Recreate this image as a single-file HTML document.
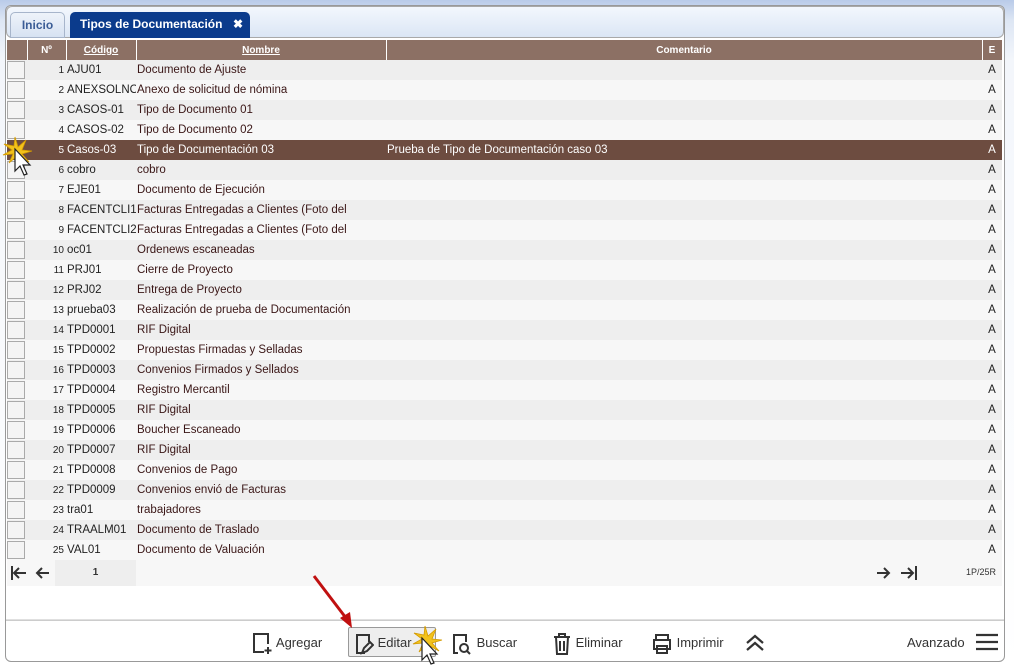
<!DOCTYPE html>
<html><head><meta charset="utf-8">
<style>
*{box-sizing:border-box;margin:0;padding:0}
body{width:1014px;height:668px;overflow:hidden;font-family:"Liberation Sans",sans-serif;background:linear-gradient(#b9cbe9 0,#dde6f4 20px,#f3f6fb 60px,#fff 100%);position:relative}
#panel{position:absolute;left:5px;top:5px;width:1000px;height:657px;border:1px solid #999;border-radius:6px;background:#fff}
#tabbar{position:absolute;left:0;top:0;width:998px;height:32px;border:1px solid #a9a9a9;border-radius:6px;background:linear-gradient(#f3f7fd,#dbe6f5)}
.tab{position:absolute;top:5px;height:26px;border-radius:5px 5px 0 0;font-weight:bold;font-size:12px;line-height:24px}
#t1{left:3px;width:55px;background:linear-gradient(#eef3fa,#d7e2f2);border:1px solid #a7b5cb;color:#3b5d96;text-align:center}
#t2{left:63px;width:180px;background:#0b3b8c;color:#fff;padding-left:10px}
#t2 span{position:absolute;right:7px;font-size:12px}
table{position:absolute;left:1px;top:34px;border-collapse:collapse;font-size:11.5px;table-layout:fixed;width:995px}
th{background:#8c7064;color:#fff;font-size:10px;height:20px;font-weight:bold;border-right:1px solid #fff;text-align:center}
th u{text-decoration:underline}
td{height:20px;white-space:nowrap;overflow:hidden;color:#222;padding:0 1px}
tr.o td{background:#eeeeee}tr.e td{background:#f7f7f7}
td.n{text-align:right;font-size:10px;padding-right:2px}
td.nm{color:#3a1616}
td.c{text-align:center}
td.cb div{width:18px;height:18px;border:1px solid #aaa;background:#f4f4f4;margin-left:-1px}
tr.s td{background:#6d4c40;color:#fff}
#pager{position:absolute;left:1px;top:554px;width:995px;height:26px;background:#f7f7f7}
#pager .pn{position:absolute;left:48px;width:81px;top:0;height:26px;background:#eeeeee;text-align:center;font-size:10px;font-weight:bold;line-height:26px;color:#333}
#pager .r{position:absolute;right:6px;top:7px;font-size:9px;color:#333}
#sep{position:absolute;left:0;top:613px;width:998px;height:2px;background:#ccc;border-top:1px solid #e0e0e0}
.btn{position:absolute;top:622px;font-size:13px;color:#333;height:30px;line-height:30px}
</style></head><body>
<div id="panel">
<div id="tabbar"><div class="tab" id="t1">Inicio</div><div class="tab" id="t2">Tipos de Documentación<span>✖</span></div></div>
<table>
<colgroup><col style="width:20px"><col style="width:39px"><col style="width:70px"><col style="width:250px"><col style="width:596px"><col style="width:20px"></colgroup>
<tr><th></th><th>Nº</th><th><u>Código</u></th><th><u>Nombre</u></th><th>Comentario</th><th>E</th></tr>
<tr class="o"><td class="cb"><div></div></td><td class="n">1</td><td>AJU01</td><td class="nm">Documento de Ajuste</td><td></td><td class="c">A</td></tr>
<tr class="e"><td class="cb"><div></div></td><td class="n">2</td><td>ANEXSOLNOM</td><td class="nm">Anexo de solicitud de nómina</td><td></td><td class="c">A</td></tr>
<tr class="o"><td class="cb"><div></div></td><td class="n">3</td><td>CASOS-01</td><td class="nm">Tipo de Documento 01</td><td></td><td class="c">A</td></tr>
<tr class="e"><td class="cb"><div></div></td><td class="n">4</td><td>CASOS-02</td><td class="nm">Tipo de Documento 02</td><td></td><td class="c">A</td></tr>
<tr class="s"><td class="cb"><div style="background:#6d4c40;border-color:#6d4c40"></div></td><td class="n">5</td><td>Casos-03</td><td>Tipo de Documentación 03</td><td>Prueba de Tipo de Documentación caso 03</td><td class="c">A</td></tr>
<tr class="o"><td class="cb"><div></div></td><td class="n">6</td><td>cobro</td><td class="nm">cobro</td><td></td><td class="c">A</td></tr>
<tr class="e"><td class="cb"><div></div></td><td class="n">7</td><td>EJE01</td><td class="nm">Documento de Ejecución</td><td></td><td class="c">A</td></tr>
<tr class="o"><td class="cb"><div></div></td><td class="n">8</td><td>FACENTCLI1</td><td class="nm">Facturas Entregadas a Clientes (Foto del</td><td></td><td class="c">A</td></tr>
<tr class="e"><td class="cb"><div></div></td><td class="n">9</td><td>FACENTCLI2</td><td class="nm">Facturas Entregadas a Clientes (Foto del</td><td></td><td class="c">A</td></tr>
<tr class="o"><td class="cb"><div></div></td><td class="n">10</td><td>oc01</td><td class="nm">Ordenews escaneadas</td><td></td><td class="c">A</td></tr>
<tr class="e"><td class="cb"><div></div></td><td class="n">11</td><td>PRJ01</td><td class="nm">Cierre de Proyecto</td><td></td><td class="c">A</td></tr>
<tr class="o"><td class="cb"><div></div></td><td class="n">12</td><td>PRJ02</td><td class="nm">Entrega de Proyecto</td><td></td><td class="c">A</td></tr>
<tr class="e"><td class="cb"><div></div></td><td class="n">13</td><td>prueba03</td><td class="nm">Realización de prueba de Documentación</td><td></td><td class="c">A</td></tr>
<tr class="o"><td class="cb"><div></div></td><td class="n">14</td><td>TPD0001</td><td class="nm">RIF Digital</td><td></td><td class="c">A</td></tr>
<tr class="e"><td class="cb"><div></div></td><td class="n">15</td><td>TPD0002</td><td class="nm">Propuestas Firmadas y Selladas</td><td></td><td class="c">A</td></tr>
<tr class="o"><td class="cb"><div></div></td><td class="n">16</td><td>TPD0003</td><td class="nm">Convenios Firmados y Sellados</td><td></td><td class="c">A</td></tr>
<tr class="e"><td class="cb"><div></div></td><td class="n">17</td><td>TPD0004</td><td class="nm">Registro Mercantil</td><td></td><td class="c">A</td></tr>
<tr class="o"><td class="cb"><div></div></td><td class="n">18</td><td>TPD0005</td><td class="nm">RIF Digital</td><td></td><td class="c">A</td></tr>
<tr class="e"><td class="cb"><div></div></td><td class="n">19</td><td>TPD0006</td><td class="nm">Boucher Escaneado</td><td></td><td class="c">A</td></tr>
<tr class="o"><td class="cb"><div></div></td><td class="n">20</td><td>TPD0007</td><td class="nm">RIF Digital</td><td></td><td class="c">A</td></tr>
<tr class="e"><td class="cb"><div></div></td><td class="n">21</td><td>TPD0008</td><td class="nm">Convenios de Pago</td><td></td><td class="c">A</td></tr>
<tr class="o"><td class="cb"><div></div></td><td class="n">22</td><td>TPD0009</td><td class="nm">Convenios envió de Facturas</td><td></td><td class="c">A</td></tr>
<tr class="e"><td class="cb"><div></div></td><td class="n">23</td><td>tra01</td><td class="nm">trabajadores</td><td></td><td class="c">A</td></tr>
<tr class="o"><td class="cb"><div></div></td><td class="n">24</td><td>TRAALM01</td><td class="nm">Documento de Traslado</td><td></td><td class="c">A</td></tr>
<tr class="e"><td class="cb"><div></div></td><td class="n">25</td><td>VAL01</td><td class="nm">Documento de Valuación</td><td></td><td class="c">A</td></tr>
</table>
<div id="pager">
<svg style="position:absolute;left:3px;top:5px" width="44" height="16" viewBox="0 0 44 16" fill="none" stroke="#333" stroke-width="2"><path d="M2 1v14M16 8H4M9 3L4 8l5 5"/><path d="M39 8H27M32 3l-5 5 5 5"/></svg>
<div class="pn">1</div>
<svg style="position:absolute;left:868px;top:5px" width="44" height="16" viewBox="0 0 44 16" fill="none" stroke="#333" stroke-width="2"><path d="M2 8h12M9 3l5 5-5 5"/><path d="M26 8h12M33 3l5 5-5 5M41 1v14"/></svg>
<div class="r">1P/25R</div>
</div>
<div id="sep"></div>
<div class="btn" style="left:245px"><svg style="vertical-align:middle" width="22" height="24" viewBox="0 0 22 24" fill="none" stroke="#333" stroke-width="2"><path d="M13 20H3V2h14v10"/><path d="M17 15v7M13.5 18.5h7"/></svg> Agregar</div>
<div class="btn" style="left:342px;width:88px;border:1px solid #999;border-radius:2px;background:#eee;padding-left:5px;top:621px">
<svg style="vertical-align:middle" width="20" height="24" viewBox="0 0 20 24" fill="none" stroke="#333" stroke-width="2"><path d="M11 21H3V3h12v7"/><path d="M8 21l2-5 6-6 3 3-6 6z"/></svg> Editar</div>
<div class="btn" style="left:445px"><svg style="vertical-align:middle" width="22" height="24" viewBox="0 0 22 24" fill="none" stroke="#333" stroke-width="2"><path d="M7 21H3V3h12v7"/><circle cx="13" cy="16" r="4"/><path d="M16 19l3 3"/></svg> Buscar</div>
<div class="btn" style="left:546px"><svg style="vertical-align:middle" width="20" height="24" viewBox="0 0 20 24" fill="none" stroke="#333" stroke-width="2"><path d="M2 5h16M7 5V2h6v3M4 5l1 17h10l1-17M8 9v10M12 9v10"/></svg> Eliminar</div>
<div class="btn" style="left:645px"><svg style="vertical-align:middle" width="22" height="24" viewBox="0 0 22 24" fill="none" stroke="#333" stroke-width="2"><path d="M5 8V3h12v5M3 8h16v9H3zM6 14h10v7H6z"/></svg> Imprimir</div>
<svg style="position:absolute;left:739px;top:628px" width="20" height="18" viewBox="0 0 20 18" fill="none" stroke="#333" stroke-width="2.2"><path d="M2 9l8-7 8 7M2 16l8-7 8 7"/></svg>
<div class="btn" style="left:901px">Avanzado</div>
<svg style="position:absolute;left:970px;top:627px" width="22" height="18" viewBox="0 0 22 18" stroke="#333" stroke-width="2.2"><path d="M0 2h22M0 9h22M0 16h22"/></svg>
</div>
<svg style="position:absolute;left:310px;top:572px" width="50" height="60" viewBox="0 0 50 60"><path d="M4 4L36 46" stroke="#c01010" stroke-width="3"/><path d="M30 46l12 10-2-16z" fill="#c01010"/></svg>
<svg style="position:absolute;left:410px;top:624px" width="40" height="44" viewBox="0 0 40 44"><path d="M15 2l3 10 8-7-4 10 10 1-10 3 7 8-9-5-1 10-3-10-7 6 4-9-10 1 9-5-8-6 10 2z" fill="#f2c21c" stroke="#d49a00" stroke-width="0.8"/><path d="M12 14v22l5-5 4 9 3-1-4-9h7z" fill="#fff" stroke="#222" stroke-width="1.2"/></svg>
<svg style="position:absolute;left:2px;top:135px" width="36" height="44" viewBox="0 0 36 44"><path d="M13 2l3 10 8-7-4 10 10 1-10 3 7 8-9-5-1 10-3-10-7 6 4-9-10 1 9-5-8-6 10 2z" fill="#f2c21c" stroke="#d49a00" stroke-width="0.8"/><path d="M13 14v22l5-5 4 9 3-1-4-9h7z" fill="#fff" stroke="#222" stroke-width="1.2"/></svg>
</body></html>
